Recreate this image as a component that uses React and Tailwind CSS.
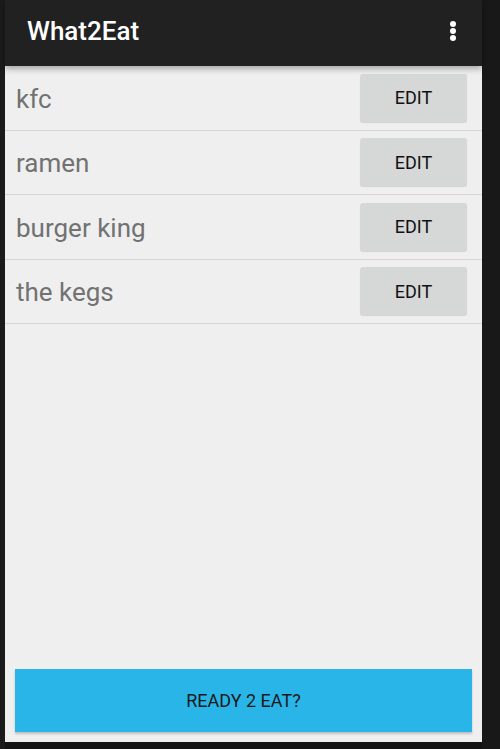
import { useState } from "react";

const places = ["kfc", "ramen", "burger king", "the kegs"];

const App = () => {
  const [items] = useState(places);

  return (
    <div className="w-[500px] h-[749px] bg-[#141414] flex overflow-hidden font-['Roboto',sans-serif]">
      <div className="w-[5px] bg-[#1b1b1b]" />
      <div className="w-[477px] h-[742px] flex flex-col bg-[#efefef]">
        <div className="h-[66px] bg-[#212121] flex items-center justify-between pl-[22px] pr-[26px] pb-[4px] shadow-[0_3px_6px_rgba(0,0,0,0.3)] z-10">
          <h1 className="text-white text-[26px] font-medium">What2Eat</h1>
          <div className="flex flex-col gap-[1px]">
            <span className="w-[6px] h-[6px] rounded-full bg-white" />
            <span className="w-[6px] h-[6px] rounded-full bg-white" />
            <span className="w-[6px] h-[6px] rounded-full bg-white" />
          </div>
        </div>
        <div className="flex-1 flex flex-col">
          {items.map((name) => (
            <div
              key={name}
              className="h-[64.5px] flex items-center justify-between pl-[11px] pr-[15px] border-b border-[#d5d5d5]"
            >
              <span className="text-[26px] text-[#727272] pt-[3px]">{name}</span>
              <button className="w-[107px] h-[48px] rounded-[3px] bg-[#d6d7d7] text-[18px] text-[#111] shadow-[0_1px_1px_rgba(0,0,0,0.12)]">
                EDIT
              </button>
            </div>
          ))}
        </div>
        <div className="px-[10px] pb-[10px]">
          <button className="w-full h-[63px] bg-[#29b5e8] text-[18px] text-[#1a1a1a] shadow-[0_2px_2px_rgba(0,0,0,0.2)]">
            READY 2 EAT?
          </button>
        </div>
      </div>
      <div className="flex-1 bg-[#181818]" />
    </div>
  );
};

export default App;
